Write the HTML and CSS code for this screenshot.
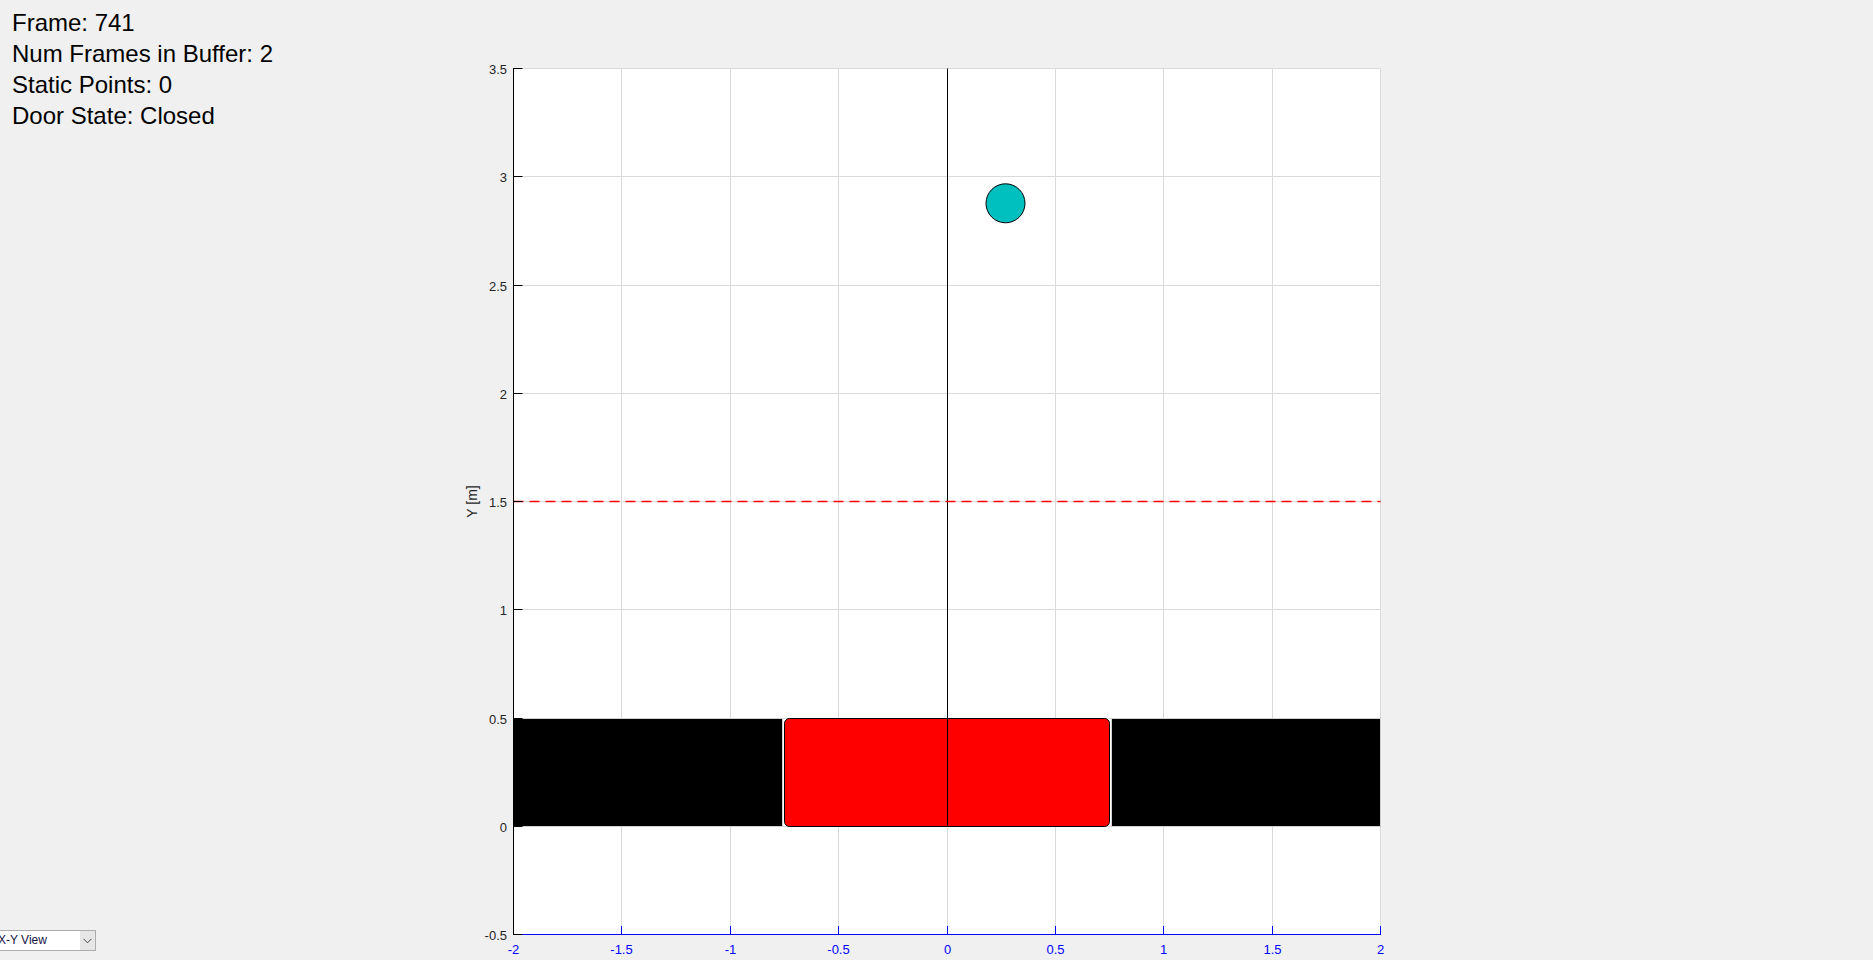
FILE: index.html
```html
<!DOCTYPE html>
<html>
<head>
<meta charset="utf-8">
<link rel="stylesheet" href="styles.css">
</head>
<body>
<div class="figure">
  <div class="sidebar">
    <div class="info">
      <div class="info-line">Frame: 741</div>
      <div class="info-line">Num Frames in Buffer: 2</div>
      <div class="info-line">Static Points: 0</div>
      <div class="info-line">Door State: Closed</div>
    </div>
    <div class="select">
      <span class="select-text">X-Y View</span>
      <span class="select-arrow">
        <svg width="9" height="6" viewBox="0 0 9 6"><path d="M0.5 0.8 L4.5 4.8 L8.5 0.8" fill="none" stroke="#444" stroke-width="1"/></svg>
      </span>
    </div>
  </div>
  <svg class="plot" width="980" height="960" viewBox="440 0 980 960">
    <rect x="513.5" y="68.5" width="867" height="866" fill="#fff"/>
    <g stroke="#dadada" stroke-width="1">
      <line x1="621.5" y1="68.5" x2="621.5" y2="934.5"/>
      <line x1="730.5" y1="68.5" x2="730.5" y2="934.5"/>
      <line x1="838.5" y1="68.5" x2="838.5" y2="934.5"/>
      <line x1="947.5" y1="68.5" x2="947.5" y2="934.5"/>
      <line x1="1055.5" y1="68.5" x2="1055.5" y2="934.5"/>
      <line x1="1163.5" y1="68.5" x2="1163.5" y2="934.5"/>
      <line x1="1272.5" y1="68.5" x2="1272.5" y2="934.5"/>
      <line x1="1380.5" y1="68.5" x2="1380.5" y2="934.5"/>
      <line x1="513.5" y1="68.5" x2="1380.5" y2="68.5"/>
      <line x1="513.5" y1="176.5" x2="1380.5" y2="176.5"/>
      <line x1="513.5" y1="285.5" x2="1380.5" y2="285.5"/>
      <line x1="513.5" y1="393.5" x2="1380.5" y2="393.5"/>
      <line x1="513.5" y1="501.5" x2="1380.5" y2="501.5"/>
      <line x1="513.5" y1="609.5" x2="1380.5" y2="609.5"/>
      <line x1="513.5" y1="718.5" x2="1380.5" y2="718.5"/>
      <line x1="513.5" y1="826.5" x2="1380.5" y2="826.5"/>
    </g>
    <rect x="513.5" y="718.5" width="269" height="108" fill="#000" stroke="#cfcfcf" stroke-width="1"/>
    <rect x="1111.5" y="718.5" width="269" height="108" fill="#000" stroke="#cfcfcf" stroke-width="1"/>
    <rect x="784.5" y="718.5" width="325" height="108" rx="5" ry="5" fill="#ff0000" stroke="#000" stroke-width="1"/>
    <line x1="947.5" y1="68.5" x2="947.5" y2="826.5" stroke="#000" stroke-width="1"/>
    <line x1="513.5" y1="501.5" x2="1380.5" y2="501.5" stroke="#ff0000" stroke-width="1.5" stroke-dasharray="10 6"/>
    <circle cx="1005.5" cy="203.3" r="19.5" fill="#00bfbf" stroke="#000" stroke-width="1"/>
    <g stroke="#0000ff" stroke-width="1">
      <line x1="513" y1="934.5" x2="1381" y2="934.5"/>
      <line x1="621.5" y1="934.5" x2="621.5" y2="926"/>
      <line x1="730.5" y1="934.5" x2="730.5" y2="926"/>
      <line x1="838.5" y1="934.5" x2="838.5" y2="926"/>
      <line x1="947.5" y1="934.5" x2="947.5" y2="926"/>
      <line x1="1055.5" y1="934.5" x2="1055.5" y2="926"/>
      <line x1="1163.5" y1="934.5" x2="1163.5" y2="926"/>
      <line x1="1272.5" y1="934.5" x2="1272.5" y2="926"/>
      <line x1="1380.5" y1="934.5" x2="1380.5" y2="926"/>
    </g>
    <g stroke="#000" stroke-width="1">
      <line x1="513.5" y1="68" x2="513.5" y2="935"/>
      <line x1="513.5" y1="68.5" x2="522.5" y2="68.5"/>
      <line x1="513.5" y1="176.5" x2="522.5" y2="176.5"/>
      <line x1="513.5" y1="285.5" x2="522.5" y2="285.5"/>
      <line x1="513.5" y1="393.5" x2="522.5" y2="393.5"/>
      <line x1="513.5" y1="501.5" x2="522.5" y2="501.5"/>
      <line x1="513.5" y1="609.5" x2="522.5" y2="609.5"/>
      <line x1="513.5" y1="718.5" x2="522.5" y2="718.5"/>
      <line x1="513.5" y1="826.5" x2="522.5" y2="826.5"/>
      <line x1="513.5" y1="934.5" x2="522.5" y2="934.5"/>
    </g>
    <g class="ytick" text-anchor="end">
      <text x="507" y="73.5">3.5</text>
      <text x="507" y="181.5">3</text>
      <text x="507" y="290.5">2.5</text>
      <text x="507" y="398.5">2</text>
      <text x="507" y="506.5">1.5</text>
      <text x="507" y="614.5">1</text>
      <text x="507" y="723.5">0.5</text>
      <text x="507" y="831.5">0</text>
      <text x="507" y="939.5">-0.5</text>
    </g>
    <g class="xtick" text-anchor="middle">
      <text x="513.5" y="954">-2</text>
      <text x="621.5" y="954">-1.5</text>
      <text x="730.5" y="954">-1</text>
      <text x="838.5" y="954">-0.5</text>
      <text x="947.5" y="954">0</text>
      <text x="1055.5" y="954">0.5</text>
      <text x="1163.5" y="954">1</text>
      <text x="1272.5" y="954">1.5</text>
      <text x="1380.5" y="954">2</text>
    </g>
    <text class="ylabel" text-anchor="middle" transform="translate(477 501.5) rotate(-90)">Y [m]</text>
  </svg>
</div>
</body>
</html>
```
FILE: styles.css
```css
html, body {
  margin: 0;
  padding: 0;
  background: #f0f0f0;
  overflow: hidden;
}
.figure {
  display: flex;
  width: 1873px;
  height: 960px;
  font-family: "Liberation Sans", Arial, sans-serif;
}
.sidebar {
  width: 440px;
  flex: none;
  display: flex;
  flex-direction: column;
  justify-content: space-between;
}
.info {
  padding: 7px 0 0 12px;
  font-size: 24px;
  line-height: 31px;
  color: #000;
}
.select {
  margin: 0 0 9px -4px;
  width: 100px;
  height: 21px;
  box-sizing: border-box;
  border: 1px solid #adadad;
  background: #fff;
  display: flex;
  align-items: stretch;
}
.select-text {
  flex: 1;
  padding-left: 1px;
  font-size: 12px;
  line-height: 19px;
  color: #141446;
}
.select-arrow {
  width: 15px;
  background: #e6e6e6;
  display: flex;
  align-items: center;
  justify-content: center;
}
.plot {
  display: block;
  flex: none;
}
.ytick text {
  font-size: 13px;
  fill: #262626;
}
.xtick text {
  font-size: 13px;
  fill: #0000ff;
}
.ylabel {
  font-size: 14px;
  fill: #262626;
}
```
